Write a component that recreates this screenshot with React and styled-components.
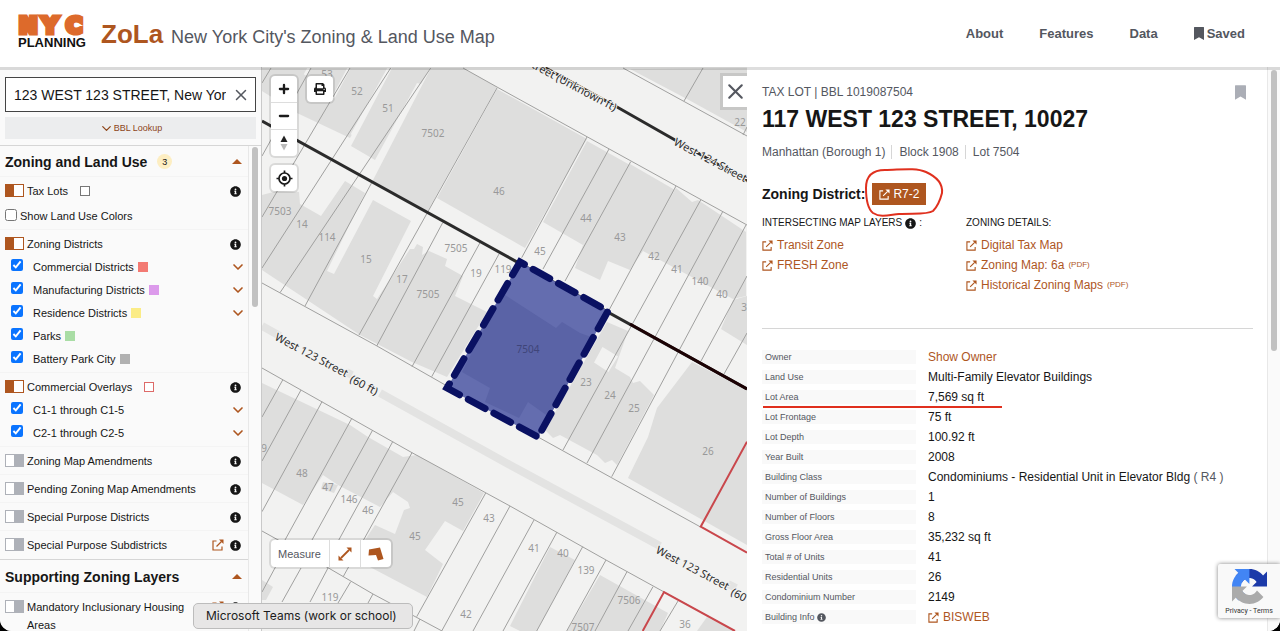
import { useState } from "react";
import styled, { createGlobalStyle } from "styled-components";
import { FaInfoCircle, FaPrint } from "react-icons/fa";
import { ChevronDown, Minus, Plus, X } from "lucide-react";

const orange = "#ae561f";
const darkGray = "#54575f";
const black = "#161616";
const lineGray = "#d6d6d6";
const panelGray = "#fafafa";
const markerRed = "#e0301e";

const GlobalStyle = createGlobalStyle`
  *, *::before, *::after {
    box-sizing: border-box;
  }
  body {
    margin: 0;
    background: #000;
    font-family: "Liberation Sans", Arial, sans-serif;
    font-size: 12px;
    color: ${black};
  }
  a {
    color: inherit;
    text-decoration: none;
  }
  button, input {
    font-family: inherit;
  }
  button {
    border: 0;
    padding: 0;
    background: none;
    cursor: pointer;
  }
  svg {
    display: block;
    flex: none;
  }
`;

const Page = styled.div`
  position: relative;
  display: flex;
  flex-direction: column;
  height: 100vh;
  overflow: hidden;
  background: #fff;
  border-radius: 0 0 12px 12px;
`;

// header //
const Header = styled.header`
  position: relative;
  z-index: 3;
  flex: none;
  display: flex;
  align-items: center;
  justify-content: space-between;
  height: 67px;
  padding: 0 35px 0 18px;
  background: #fff;
  box-shadow: 0 3px 0 rgba(0, 0, 0, 0.13);
`;

const Brand = styled.div`
  display: flex;
  align-items: center;
  gap: 13px;
`;

const Logo = styled.svg`
  overflow: visible;
`;

const Title = styled.h1`
  display: flex;
  align-items: baseline;
  gap: 8px;
  margin: 0;
  padding-top: 4px;
  font-size: 26px;
  line-height: 30px;
  color: ${orange};
`;

const SubTitle = styled.small`
  font-size: 18px;
  font-weight: 400;
  color: ${darkGray};
`;

const Nav = styled.nav`
  display: flex;
  gap: 36px;
  font-size: 13px;
  font-weight: 700;
  color: ${darkGray};
`;

const NavLink = styled.a`
  display: flex;
  align-items: center;
  gap: 3px;
`;

const Main = styled.main`
  flex: 1;
  min-height: 0;
  display: flex;
`;

// scroll bars //
const ScrollTrack = styled.div`
  flex: none;
  width: 13px;
  padding: ${(props) => props.$top}px 3px 0;
  background: ${panelGray};
  border-left: 1px solid #e8e8e8;
`;

const ScrollThumb = styled.div`
  height: ${(props) => props.$length};
  border-radius: 4px;
  background: #c1c1c1;
`;

// layer menu //
const Sidebar = styled.aside`
  flex: none;
  display: flex;
  flex-direction: column;
  width: 262px;
  background: ${panelGray};
  border-right: 1px solid #c9c9c9;
`;

const SearchBlock = styled.div`
  flex: none;
  display: grid;
  gap: 5px;
  padding: 10px 5px 6px;
  border-bottom: 1px solid ${lineGray};
`;

const SearchBox = styled.div`
  display: flex;
  align-items: center;
  height: 35px;
  padding: 0 5px 0 8px;
  background: #fff;
  border: 1px solid #444;
`;

const SearchInput = styled.input`
  flex: 1;
  min-width: 0;
  margin-right: 6px;
  padding: 0;
  border: 0;
  outline: 0;
  background: none;
  font-size: 14px;
  color: ${black};
`;

const LookupButton = styled.button`
  display: flex;
  align-items: center;
  justify-content: center;
  height: 22px;
  background: #ecedee;
  font-size: 9px;
  color: #8d4519;
`;

const LayerArea = styled.div`
  flex: 1;
  min-height: 0;
  display: flex;
`;

const LayerList = styled.div`
  flex: 1;
  overflow: hidden;
`;

const SectionHeading = styled.h2`
  display: flex;
  align-items: center;
  height: ${(props) => (props.$first ? 31 : 34)}px;
  margin: 0;
  padding: 0 6px 0 5px;
  border-top: ${(props) => (props.$first ? 0 : 1)}px solid ${lineGray};
  font-size: 14px;
`;

const CountBadge = styled.span`
  display: grid;
  place-items: center;
  width: 15px;
  height: 15px;
  margin-left: 10px;
  border-radius: 50%;
  background: #fdeec2;
  font-size: 9px;
  font-weight: 400;
`;

const Caret = styled.button`
  margin-left: auto;
  border: 5px solid transparent;
  border-top: 0;
  border-bottom-color: ${orange};
`;

const Group = styled.div`
  padding: 5px 7px ${(props) => (props.$open ? 3 : 5)}px 5px;
  font-size: 11px;
  border-top: 1px solid #f4f4f4;
  margin-top: -1px;
`;

const GroupRow = styled.div`
  display: flex;
  align-items: flex-start;
  gap: 6px;
  min-height: 18px;
  line-height: 18px;
`;

const GroupLabel = styled.label`
  flex: 1;
  display: flex;
  align-items: flex-start;
  gap: 3px;
`;

const RowIcons = styled.span`
  display: flex;
  align-items: center;
  gap: 6px;
  height: 18px;
`;

const LayerLink = styled.a`
  color: ${orange};
`;

const Toggle = styled.input`
  appearance: none;
  flex: none;
  width: 19px;
  height: 13px;
  margin: 2px 0 0;
  border: 1px solid;
  border-color: ${orange};
  background: linear-gradient(90deg, ${orange} 50%, #fff 50%);
  &:not(:checked) {
    border-color: #aeb1b8;
    background: linear-gradient(90deg, #fff 50%, #aeb1b8 50%);
  }
`;

const SubList = styled.div`
  padding-top: 2px;
`;

const SubRow = styled.div`
  display: flex;
  align-items: center;
  height: 23px;
  margin-right: -5px;
  padding-left: 6px;
`;

const SubLabel = styled.label`
  flex: 1;
  display: flex;
  align-items: center;
  gap: 10px;
`;

const SubText = styled.span`
  display: flex;
  align-items: center;
  gap: 4px;
`;

const LandUseRow = styled.label`
  display: flex;
  align-items: center;
  gap: 3px;
  height: 27px;
  padding-top: 5px;
`;

const Tick = styled.input`
  flex: none;
  width: 12px;
  height: 12px;
  margin: 0 0 3px;
  accent-color: #0a74ff;
`;

const Swatch = styled.span`
  width: 10px;
  height: 10px;
  background: ${(props) => props.$fill || "#fff"};
  border: 1px solid ${(props) => props.$edge || props.$fill};
`;

const OutlineSwatch = styled(Swatch)`
  align-self: center;
  margin-left: 9px;
`;

// map //
const MapPane = styled.section`
  flex: 1;
  min-width: 0;
  position: relative;
  overflow: hidden;
  background: #f2f2f1;
`;

const MapSvg = styled.svg`
  width: 100%;
  height: 100%;
`;

const ControlStack = styled.div`
  position: absolute;
  z-index: 1;
  top: ${(props) => props.$top}px;
  left: ${(props) => props.$left}px;
  display: flex;
  flex-direction: column;
  border-radius: 4px;
  background: #fff;
  box-shadow: 0 0 0 2px rgba(0, 0, 0, 0.1);
`;

const ControlButton = styled.button`
  display: grid;
  place-items: center;
  width: 26px;
  height: 26px;
  color: #1b1b1b;
  & + & {
    height: 27px;
    border-top: 1px solid #ddd;
  }
`;

const MeasureBar = styled.div`
  position: absolute;
  bottom: 64px;
  left: 9px;
  display: flex;
  height: 27px;
  border-radius: 4px;
  background: #fff;
  box-shadow: 0 0 0 2px rgba(0, 0, 0, 0.1);
`;

const MeasureText = styled.span`
  width: 58px;
  padding-left: 7px;
  line-height: 28px;
  font-size: 11px;
  color: ${darkGray};
`;

const MeasureButton = styled.button`
  display: grid;
  place-items: center;
  width: 31px;
  border-left: 1px solid #ddd;
`;

const CloseButton = styled.button`
  position: absolute;
  top: 9px;
  right: 0;
  display: grid;
  place-items: center;
  width: 24px;
  height: 31px;
  background: #fff;
  box-shadow: 0 0 0 3px rgba(0, 0, 0, 0.1);
  color: ${darkGray};
`;

// lot details //
const DetailPane = styled.section`
  flex: none;
  display: flex;
  width: 533px;
  background: #fff;
`;

const DetailBody = styled.div`
  flex: 1;
  min-width: 0;
  overflow: hidden;
  padding: 17px 14px 0 15px;
`;

const Eyebrow = styled.div`
  display: flex;
  justify-content: space-between;
  padding-right: 7px;
  line-height: 16px;
  color: ${darkGray};
`;

const BookmarkButton = styled.button`
  color: #abaeb6;
`;

const Address = styled.h2`
  margin: 5px 0 12px;
  font-size: 23px;
  line-height: 28px;
`;

const LotIds = styled.div`
  display: flex;
  align-items: center;
  line-height: 14px;
  color: ${darkGray};
`;

const LotId = styled.span`
  & + & {
    margin-left: 6px;
    padding-left: 7px;
    border-left: 1px solid ${lineGray};
  }
`;

const DistrictRow = styled.div`
  display: flex;
  align-items: center;
  gap: 7px;
  margin: 24px 0 12px;
`;

const DistrictTitle = styled.h3`
  margin: 0;
  font-size: 14px;
`;

const DistrictWrap = styled.span`
  position: relative;
`;

const DistrictLink = styled.a`
  display: flex;
  align-items: center;
  gap: 3px;
  height: 22px;
  padding: 0 7px;
  background: ${orange};
  font-size: 12px;
  color: #fff;
`;

const MarkerRing = styled.svg`
  position: absolute;
  top: -16px;
  left: -7px;
  pointer-events: none;
`;

const LinkColumns = styled.div`
  display: grid;
  grid-template-columns: 204px 1fr;
  min-height: 112px;
  border-bottom: 1px solid ${lineGray};
`;

const ColumnTitle = styled.h4`
  display: flex;
  align-items: center;
  gap: 3px;
  margin: 0 0 6px;
  font-size: 10px;
  font-weight: 400;
  line-height: 12px;
`;

const OutLink = styled.a`
  display: flex;
  align-items: center;
  gap: 4px;
  line-height: 20px;
  color: ${orange};
  small {
    font-size: 8px;
  }
`;

const LotTable = styled.table`
  width: 100%;
  margin-top: 18px;
  border-collapse: collapse;
`;

const LotRow = styled.tr`
  position: relative;
  height: 20px;
`;

const LotHead = styled.th`
  width: 154px;
  padding: 0;
  text-align: left;
  font-size: 9px;
  font-weight: 400;
  color: ${darkGray};
`;

const HeadText = styled.span`
  display: flex;
  align-items: center;
  gap: 2px;
  height: 14px;
  padding-left: 3px;
  background: #f9f9f9;
`;

const LotValue = styled.td`
  padding: 0 0 0 12px;
  line-height: 20px;
`;

const OwnerButton = styled.button`
  font-size: 12px;
  color: ${orange};
`;

const Muted = styled.span`
  color: ${darkGray};
`;

const MarkerLine = styled.span`
  position: absolute;
  bottom: -1px;
  left: 1px;
  width: 239px;
  height: 2px;
  background: ${markerRed};
`;

// floating boxes //
const DockTip = styled.div`
  position: absolute;
  z-index: 4;
  left: 193px;
  bottom: 2px;
  width: 220px;
  height: 26px;
  padding: 0 12px;
  border: 1px solid #bcbcbc;
  border-radius: 5px;
  background: #e7e6e6;
  font-family: Inter, "Liberation Sans", sans-serif;
  font-size: 12px;
  line-height: 24px;
  color: #1c1c1c;
`;

const CaptchaBadge = styled.div`
  position: absolute;
  z-index: 4;
  right: 0;
  bottom: 13px;
  display: flex;
  flex-direction: column;
  align-items: center;
  width: 62px;
  height: 54px;
  padding-top: 5px;
  background: #f9f9f9;
  border-radius: 2px 0 0 2px;
  box-shadow: 0 0 4px #808080;
  font-family: Roboto, sans-serif;
  font-size: 7px;
  line-height: 14px;
  color: #333;
`;

const LogoNyc = () => (
  <Logo width="70" height="38" viewBox="0 0 70 38" role="img" aria-label="NYC Planning">
    <text
      x="1 24 48"
      y="18"
      fontFamily="DejaVu Sans, sans-serif"
      fontWeight="700"
      fontSize="22"
      fill="#dd6a2b"
      stroke="#dd6a2b"
      strokeWidth="5"
    >
      NYC
    </text>
    <text x="0" y="32" fontFamily="Liberation Sans, sans-serif" fontWeight="700" fontSize="13" fill="#111">
      PLANNING
    </text>
  </Logo>
);

const BookmarkIcon = ({ width, height }) => (
  <svg width={width} height={height} viewBox="0 0 10 13" fill="currentColor">
    <path d="M0 0.500Q0 0 0.500 0h9Q10 0 10 0.500V13L5 10.200 0 13z" />
  </svg>
);

const ExternalIcon = ({ size = 11 }) => (
  <svg width={size} height={size} viewBox="0 0 12 12" fill="none" stroke="currentColor" strokeWidth="1.2">
    <path d="M4.500 2H1v9h9V7.500" />
    <path d="M4.500 7.500L9.500 2.500" />
    <path d="M7 0.500h4.500V5z" fill="currentColor" stroke="none" />
  </svg>
);

const CaptchaLogo = () => (
  <svg width="35" height="35" viewBox="0 0 64 64">
    <path
      fill="#1c3aa9"
      d="M64 31.955l-.033-1.37V4.687l-7.16 7.16C50.948 4.674 42.033.093 32.05.093c-10.4 0-19.622 4.96-25.458 12.64l11.736 11.86a15.55 15.55 0 0 1 4.754-5.334c2.05-1.6 4.952-2.906 8.968-2.906.485 0 .86.057 1.135.163 4.976.393 9.288 3.14 11.828 7.124l-8.307 8.307L64 31.953"
    />
    <path
      fill="#4285f4"
      d="M31.862.094l-1.37.033H4.594l7.16 7.16C4.58 13.147 0 22.06 0 32.046c0 10.4 4.96 19.622 12.64 25.458L24.5 45.768a15.55 15.55 0 0 1-5.334-4.754c-1.6-2.05-2.906-4.952-2.906-8.968 0-.485.057-.86.163-1.135.393-4.976 3.14-9.288 7.124-11.828l8.307 8.307L31.86.095"
    />
    <path
      fill="#ababab"
      d="M.001 32.045l.033 1.37v25.898l7.16-7.16c5.86 7.173 14.774 11.754 24.76 11.754 10.4 0 19.622-4.96 25.458-12.64l-11.736-11.86a15.55 15.55 0 0 1-4.754 5.334c-2.05 1.6-4.952 2.906-8.968 2.906-.485 0-.86-.057-1.135-.163-4.976-.393-9.288-3.14-11.828-7.124l8.307-8.307c-10.522.04-22.4.066-27.295-.005"
    />
  </svg>
);

// map data //
const buildings = [
  "262,68 390,68 350,138 297,113 262,91",
  "392,68 430,68 421,84 417,83 375,160 351,146",
  "431,68 463,68 497,87 427,212 372,182",
  "497,89 587,139 525,248 437,198",
  "587,141 630,165 583,245 543,222",
  "630,164 675,190 630,270 608,261 600,280 575,268 583,245",
  "676,188 692,202 698,200 746,232 746,296 733,299 643,251 630,270",
  "733,300 747,296 747,345 721,329",
  "630,69 747,68 747,132 687,99",
  "262,195 277,191 299,192 300,204 321,216 345,181 365,193 327,271 334,274 373,200 411,221 373,296 377,299 410,249 414,249 417,244 423,247 422,255 429,251 447,259 445,266 463,276 455,296 487,312 447,377 412,362 360,335 262,270",
  "607,322 628,331 615,368 630,377 633,383 640,381 654,395 617,465 612,460 605,463 597,455 560,435 553,438 545,430",
  "692,362 747,390 747,545 628,478 648,437 657,408",
  "262,383 350,425 368,437 403,457 417,455 484,493 463,531 445,521 425,550 443,564 427,597 368,566 365,540 375,525 395,534 404,510 410,508 408,502 393,492 380,507 338,485 323,475 303,505 262,483",
  "323,482 338,485 334,493 321,489",
  "262,580 273,587 266,600 262,600",
  "550,547 575,560 537,631 520,631 510,626",
  "600,575 668,613 660,631 567,631",
  "707,617 735,631 697,631",
];

const lotLines =
  "M463 68L500 88.7 747 225M623 68L747 136M684 101L703 68M743 135l4-8" +
  "M262 83L271 68M311 68L262 156M350 68L262 217M390.7 68L262 268M430.7 68L280 292.7" +
  "M497 88L359 335M371.7 182.7L305 306M442.7 222.7L376.7 346M480 242.7L412 366.7M499 254L431.7 376.7" +
  "M587 137L521.7 257.7M609 149L543 269M630.7 161.7L565 281M676 186L608 312" +
  "M700.7 200L563 450M722.7 211.7L587 463M746 225L611.7 476.7M747 276L701 361M747 333L724 374" +
  "M262 283L377 346 447 386M538 437L700 526.7" +
  "M262 368L412 452.7 510 506 606 560 735 631M262 531L328 567.7 373 594 442 631" +
  "M282.7 380L262 417M301 390L262 461M322 401.7L262 511.7M352 418L285 540M372.7 430L312 540M392.7 441.7L330 556M412 452.7L343 577" +
  "M485.7 493L416.7 616.7M510 506L441.7 631M534 520L473 631M557 532L503 631M582.7 546.7L536.7 631M606 560L566.7 631M627 571.7L595 631M653 586.7L628 631M678 601L660 631" +
  "M276 566L262 592M301 568L282 602M328 568L310 602M350.7 581.7L338 603M373 594L368 603M420 619L414 631";

const lotLabels = [
  ["53", 327, 74],
  ["52", 357, 91],
  ["51", 388, 108],
  ["7502", 433, 133],
  ["46", 499, 191],
  ["7503", 280, 211],
  ["14", 302, 224],
  ["114", 327, 237],
  ["15", 366, 259],
  ["17", 402, 279],
  ["7505", 456, 248],
  ["7505", 428, 294],
  ["19", 476, 273],
  ["119", 503, 269],
  ["45", 540, 251],
  ["44", 586, 218],
  ["43", 620, 237],
  ["42", 654, 256],
  ["41", 677, 269],
  ["140", 700, 281],
  ["40", 722, 294],
  ["3", 744, 307],
  ["22", 740, 122],
  ["23", 586, 382],
  ["24", 610, 395],
  ["25", 634, 408],
  ["26", 708, 451],
  ["9", 264, 448],
  ["48", 302, 473],
  ["47", 328, 487],
  ["146", 349, 499],
  ["46", 368, 510],
  ["45", 415, 536],
  ["45", 458, 502],
  ["43", 489, 518],
  ["119", 330, 597],
  ["42", 466, 614],
  ["41", 534, 548],
  ["40", 563, 553],
  ["139", 586, 570],
  ["7506", 629, 600],
  ["7507", 583, 627],
  ["36", 685, 624],
];

const streetLabels = [
  { text: "West 124 Street (Unknown ft)", x: 616, y: 108, anchor: "end" },
  { text: "West 124 Street", x: 675, y: 141 },
  { text: "West 123 Street", x: 276, y: 336 },
  { text: "(60 ft)", x: 351, y: 378 },
  { text: "West 123 Street", x: 657, y: 549 },
  { text: "(60 ft)", x: 732, y: 591 },
];

const ZoningMap = () => (
  <MapSvg viewBox="262 67 485 564" preserveAspectRatio="xMidYMid slice" fontFamily="Noto Sans, sans-serif">
    {buildings.map((points) => (
      <polygon key={points} points={points} fill="#dededd" />
    ))}
    <g stroke="#f2f2f1" strokeWidth="3">
      <path d="M349 68L333 98M389 68L352 135M309 68L305 75" />
      <path d="M603 349L616 357 608 370 596 362z" fill="#f2f2f1" />
    </g>
    <g stroke="#e3e3e2" strokeWidth="8" fill="none">
      <path d="M262 326L280 336M346 372L352 375M380 393L510 465 660 546M728 584L736 588" />
    </g>
    <path d={lotLines} fill="none" stroke="#a0a09f" strokeWidth="1" />
    <g fontSize="10" textAnchor="middle" fill="#999">
      {lotLabels.map(([text, x, y]) => (
        <text key={text + x} x={x} y={y + 4}>
          {text}
        </text>
      ))}
    </g>
    <path d="M262 121L747 389" stroke="#2b2b2b" strokeWidth="3" />
    <path d="M630 324L747 389" stroke="#1c0204" strokeWidth="3" />
    <path d="M540 65L617 107 747 181" stroke="#2b2b2b" strokeWidth="3" fill="none" />
    <path d="M747 441.7L700.7 526.7 747 552.7M642.7 631L664 592 735 631" stroke="#c9474c" strokeWidth="2" fill="none" />
    <polygon points="520,262 608,311 538,437 447,388" fill="#646daf" />
    <polygon points="502,293 556,328 562,322 580,333 594,338 549,417 528,402 519,418 485,402 490,388 462,372" fill="#5a63a6" />
    <polygon
      points="520,262 608,311 538,437 447,388"
      fill="none"
      stroke="#0a1162"
      strokeWidth="7"
      strokeLinecap="round"
      strokeDasharray="19 10"
      strokeDashoffset="14"
    />
    <text x="528" y="353" fontSize="10" textAnchor="middle" fill="#3f4579">
      7504
    </text>
    <g fontSize="11" fill="#2b2b2b" stroke="#f2f2f1" strokeWidth="2" paintOrder="stroke">
      {streetLabels.map(({ text, x, y, anchor = "start" }) => (
        <text key={text + x} x={x} y={y + 4} textAnchor={anchor} transform={`rotate(28 ${x} ${y})`}>
          {text}
        </text>
      ))}
    </g>
  </MapSvg>
);

const layers = [
  {
    name: "Zoning Districts",
    on: true,
    children: [
      { name: "Commercial Districts", fill: "#f37a73", more: true },
      { name: "Manufacturing Districts", fill: "#dc9aeb", more: true },
      { name: "Residence Districts", fill: "#fbec86", more: true },
      { name: "Parks", fill: "#a9dda5" },
      { name: "Battery Park City", fill: "#b1b1b1" },
    ],
  },
  {
    name: "Commercial Overlays",
    on: true,
    edge: "#dd6a68",
    children: [
      { name: "C1-1 through C1-5", more: true },
      { name: "C2-1 through C2-5", more: true },
    ],
  },
  { name: "Zoning Map Amendments" },
  { name: "Pending Zoning Map Amendments" },
  { name: "Special Purpose Districts" },
  { name: "Special Purpose Subdistricts", link: true },
];

const LayerGroup = ({ layer, children }) => {
  const [on, setOn] = useState(Boolean(layer.on));
  return (
    <Group $open={Boolean(layer.children || children)}>
      <GroupRow>
        <GroupLabel>
          <Toggle type="checkbox" checked={on} onChange={() => setOn(!on)} />
          {layer.name}
          {layer.edge && <OutlineSwatch $edge={layer.edge} />}
        </GroupLabel>
        <RowIcons>
          {layer.link && (
            <LayerLink href="#layer-info" aria-label="Open">
              <ExternalIcon size={12} />
            </LayerLink>
          )}
          <FaInfoCircle size={11} />
        </RowIcons>
      </GroupRow>
      {layer.children && (
        <SubList>
          {layer.children.map((child) => (
            <SubRow key={child.name}>
              <SubLabel>
                <Tick type="checkbox" defaultChecked />
                <SubText>
                  {child.name}
                  {child.fill && <Swatch $fill={child.fill} />}
                </SubText>
              </SubLabel>
              {child.more && <ChevronDown size={16} color={orange} strokeWidth={2.5} />}
            </SubRow>
          ))}
        </SubList>
      )}
      {children}
    </Group>
  );
};

const lotFacts = [
  ["Owner", <OwnerButton>Show Owner</OwnerButton>],
  ["Land Use", "Multi-Family Elevator Buildings"],
  ["Lot Area", "7,569 sq ft"],
  ["Lot Frontage", "75 ft"],
  ["Lot Depth", "100.92 ft"],
  ["Year Built", "2008"],
  [
    "Building Class",
    <>
      Condominiums - Residential Unit in Elevator Bldg <Muted>( R4 )</Muted>
    </>,
  ],
  ["Number of Buildings", "1"],
  ["Number of Floors", "8"],
  ["Gross Floor Area", "35,232 sq ft"],
  ["Total # of Units", "41"],
  ["Residential Units", "26"],
  ["Condominium Number", "2149"],
  [
    "Building Info",
    <OutLink href="#bisweb">
      <ExternalIcon />
      BISWEB
    </OutLink>,
  ],
];

const App = () => {
  const [search, setSearch] = useState("123 WEST 123 STREET, New York, NY, USA");

  return (
    <Page>
      <GlobalStyle />
      <Header>
        <Brand>
          <LogoNyc />
          <Title>
            ZoLa <SubTitle>New York City's Zoning &amp; Land Use Map</SubTitle>
          </Title>
        </Brand>
        <Nav>
          <NavLink href="#about">About</NavLink>
          <NavLink href="#features">Features</NavLink>
          <NavLink href="#data">Data</NavLink>
          <NavLink href="#saved">
            <BookmarkIcon width={10} height={13} />
            Saved
          </NavLink>
        </Nav>
      </Header>

      <Main>
        <Sidebar>
          <SearchBlock>
            <SearchBox>
              <SearchInput aria-label="Search" value={search} onChange={(e) => setSearch(e.target.value)} />
              <button aria-label="Clear search" onClick={() => setSearch("")}>
                <X size={18} color={darkGray} />
              </button>
            </SearchBox>
            <LookupButton>
              <ChevronDown size={15} />
              BBL Lookup
            </LookupButton>
          </SearchBlock>
          <LayerArea>
            <LayerList>
              <SectionHeading $first>
                Zoning and Land Use <CountBadge>3</CountBadge>
                <Caret aria-label="Collapse" />
              </SectionHeading>
              <LayerGroup layer={{ name: "Tax Lots", on: true, edge: "#777" }}>
                <LandUseRow>
                  <Tick type="checkbox" />
                  Show Land Use Colors
                </LandUseRow>
              </LayerGroup>
              {layers.map((layer) => (
                <LayerGroup key={layer.name} layer={layer} />
              ))}
              <SectionHeading>
                Supporting Zoning Layers
                <Caret aria-label="Collapse" />
              </SectionHeading>
              <LayerGroup layer={{ name: "Mandatory Inclusionary Housing Areas", link: true }} />
            </LayerList>
            <ScrollTrack $top={1}>
              <ScrollThumb $length="33%" />
            </ScrollTrack>
          </LayerArea>
        </Sidebar>

        <MapPane>
          <ZoningMap />
          <ControlStack $top={9} $left={9}>
            <ControlButton aria-label="Zoom in">
              <Plus size={14} strokeWidth={4} />
            </ControlButton>
            <ControlButton aria-label="Zoom out">
              <Minus size={14} strokeWidth={4} />
            </ControlButton>
            <ControlButton aria-label="Reset north">
              <svg width="8" height="16" viewBox="0 0 8 16">
                <path d="M0.5 7L4 0.5 7.5 7z" fill="#222" />
                <path d="M0.5 9L4 15.5 7.5 9z" fill="#bbb" />
              </svg>
            </ControlButton>
          </ControlStack>
          <ControlStack $top={98} $left={9}>
            <ControlButton aria-label="Find my location">
              <svg width="17" height="17" viewBox="0 0 17 17" fill="none" stroke="#1b1b1b" strokeWidth="1.7">
                <circle cx="8.5" cy="8.5" r="5.5" />
                <circle cx="8.5" cy="8.5" r="2.6" fill="#1b1b1b" stroke="none" />
                <path d="M8.5 0.5V3M8.5 14v2.500M0.5 8.500H3M14 8.500h2.500" />
              </svg>
            </ControlButton>
          </ControlStack>
          <ControlStack $top={9} $left={45}>
            <ControlButton aria-label="Print">
              <FaPrint size={12} />
            </ControlButton>
          </ControlStack>
          <MeasureBar>
            <MeasureText>Measure</MeasureText>
            <MeasureButton aria-label="Measure distance">
              <svg width="14" height="14" viewBox="0 0 14 14" fill={orange}>
                <path d="M3 11L11 3" stroke={orange} strokeWidth="1.8" />
                <path d="M8.500 0.500h5v5zM0.500 8.500v5h5z" />
              </svg>
            </MeasureButton>
            <MeasureButton aria-label="Measure area">
              <svg width="16" height="14" viewBox="0 0 16 14" fill={orange}>
                <path d="M1 2.500L12 0.500 15.500 12 10 13.500 8 8 0.500 8.500z" />
              </svg>
            </MeasureButton>
          </MeasureBar>
          <CloseButton aria-label="Close">
            <X size={25} />
          </CloseButton>
        </MapPane>

        <DetailPane>
          <DetailBody>
            <Eyebrow>
              TAX LOT | BBL 1019087504
              <BookmarkButton aria-label="Bookmark this lot">
                <BookmarkIcon width={11} height={15} />
              </BookmarkButton>
            </Eyebrow>
            <Address>117 WEST 123 STREET, 10027</Address>
            <LotIds>
              <LotId>Manhattan (Borough 1)</LotId>
              <LotId>Block 1908</LotId>
              <LotId>Lot 7504</LotId>
            </LotIds>
            <DistrictRow>
              <DistrictTitle>Zoning District:</DistrictTitle>
              <DistrictWrap>
                <DistrictLink href="#r7-2">
                  <ExternalIcon />
                  R7-2
                </DistrictLink>
                <MarkerRing width="80" height="52" viewBox="0 0 80 52" fill="none" stroke={markerRed} strokeWidth="2">
                  <path d="M1 21C1 8 8 3 20 3C34 3 50 0 61 5C72 10 78 17 77 26C75 34 72 40 68 44C62 48 48 46 34 47C24 48 16 51 8 46C3 42 1 33 1 21z" />
                </MarkerRing>
              </DistrictWrap>
            </DistrictRow>
            <LinkColumns>
              <div>
                <ColumnTitle>
                  INTERSECTING MAP LAYERS <FaInfoCircle size={11} /> :
                </ColumnTitle>
                <OutLink href="#transit">
                  <ExternalIcon />
                  Transit Zone
                </OutLink>
                <OutLink href="#fresh">
                  <ExternalIcon />
                  FRESH Zone
                </OutLink>
              </div>
              <div>
                <ColumnTitle>ZONING DETAILS:</ColumnTitle>
                <OutLink href="#tax-map">
                  <ExternalIcon />
                  Digital Tax Map
                </OutLink>
                <OutLink href="#zoning-map">
                  <ExternalIcon />
                  Zoning Map: 6a <small>(PDF)</small>
                </OutLink>
                <OutLink href="#historical">
                  <ExternalIcon />
                  Historical Zoning Maps <small>(PDF)</small>
                </OutLink>
              </div>
            </LinkColumns>
            <LotTable>
              <tbody>
                {lotFacts.map(([name, value]) => (
                  <LotRow key={name}>
                    <LotHead scope="row">
                      <HeadText>
                        {name}
                        {name === "Building Info" && <FaInfoCircle size={9} />}
                      </HeadText>
                      {name === "Lot Area" && <MarkerLine />}
                    </LotHead>
                    <LotValue>{value}</LotValue>
                  </LotRow>
                ))}
              </tbody>
            </LotTable>
          </DetailBody>
          <ScrollTrack $top={3}>
            <ScrollThumb $length="50%" />
          </ScrollTrack>
        </DetailPane>
      </Main>

      <DockTip>Microsoft Teams (work or school)</DockTip>
      <CaptchaBadge>
        <CaptchaLogo />
        Privacy - Terms
      </CaptchaBadge>
    </Page>
  );
};

export default App;
